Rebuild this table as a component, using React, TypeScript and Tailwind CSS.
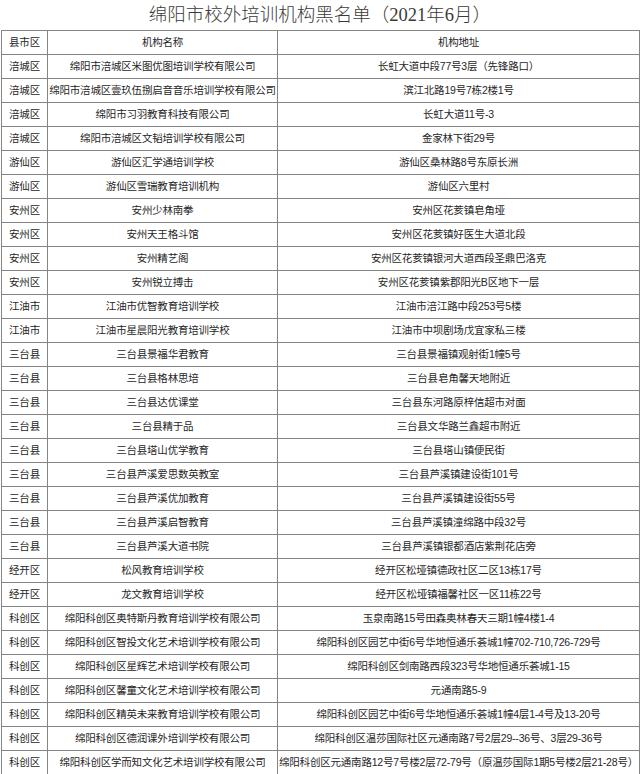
import React from 'react';

type Row = [string, string, string];

const rows: Row[] = [
  ['涪城区', '绵阳市涪城区米图优图培训学校有限公司', '长虹大道中段77号3层（先锋路口）'],
  ['涪城区', '绵阳市涪城区壹玖伍捌启音音乐培训学校有限公司', '滨江北路19号7栋2楼1号'],
  ['涪城区', '绵阳市习羽教育科技有限公司', '长虹大道11号-3'],
  ['涪城区', '绵阳市涪城区文韬培训学校有限公司', '金家林下街29号'],
  ['游仙区', '游仙区汇学通培训学校', '游仙区桑林路8号东原长洲'],
  ['游仙区', '游仙区雪瑞教育培训机构', '游仙区六里村'],
  ['安州区', '安州少林南拳', '安州区花荄镇皂角垭'],
  ['安州区', '安州天王格斗馆', '安州区花荄镇好医生大道北段'],
  ['安州区', '安州精艺阁', '安州区花荄镇银河大道西段圣鼎巴洛克'],
  ['安州区', '安州锐立搏击', '安州区花荄镇紫郡阳光B区地下一层'],
  ['江油市', '江油市优智教育培训学校', '江油市涪江路中段253号5楼'],
  ['江油市', '江油市星晨阳光教育培训学校', '江油市中坝剧场戊宜家私三楼'],
  ['三台县', '三台县景福华君教育', '三台县景福镇观射街1幢5号'],
  ['三台县', '三台县格林思培', '三台县皂角馨天地附近'],
  ['三台县', '三台县达优课堂', '三台县东河路原梓信超市对面'],
  ['三台县', '三台县精于品', '三台县文华路兰鑫超市附近'],
  ['三台县', '三台县塔山优学教育', '三台县塔山镇便民街'],
  ['三台县', '三台县芦溪爱思数英教室', '三台县芦溪镇建设街101号'],
  ['三台县', '三台县芦溪优加教育', '三台县芦溪镇建设街55号'],
  ['三台县', '三台县芦溪启智教育', '三台县芦溪镇潼绵路中段32号'],
  ['三台县', '三台县芦溪大道书院', '三台县芦溪镇银都酒店紫荆花店旁'],
  ['经开区', '松风教育培训学校', '经开区松垭镇德政社区二区13栋17号'],
  ['经开区', '龙文教育培训学校', '经开区松垭镇福馨社区一区11栋22号'],
  ['科创区', '绵阳科创区奥特斯丹教育培训学校有限公司', '玉泉南路15号田森奥林春天三期1幢4楼1-4'],
  ['科创区', '绵阳科创区智投文化艺术培训学校有限公司', '绵阳科创区园艺中街6号华地恒通乐荟城1幢702-710,726-729号'],
  ['科创区', '绵阳科创区星辉艺术培训学校有限公司', '绵阳科创区剑南路西段323号华地恒通乐荟城1-15'],
  ['科创区', '绵阳科创区馨童文化艺术培训学校有限公司', '元通南路5-9'],
  ['科创区', '绵阳科创区精英未来教育培训学校有限公司', '绵阳科创区园艺中街6号华地恒通乐荟城1幢4层1-4号及13-20号'],
  ['科创区', '绵阳科创区德润课外培训学校有限公司', '绵阳科创区温莎国际社区元通南路7号2层29--36号、3层29-36号'],
  ['科创区', '绵阳科创区学而知文化艺术培训学校有限公司', '绵阳科创区元通南路12号7号楼2层72-79号（原温莎国际1期5号楼2层21-28号）'],
];

const cell = 'border border-[#858585] text-center align-middle p-0 whitespace-nowrap overflow-hidden';

export default function App() {
  return (
    <div className="w-[640px] h-[774px] bg-white overflow-hidden text-[#262626]">
      {/* Title */}
      <h1 className="h-[30px] flex items-center justify-center text-[18.5px] leading-none font-light text-[#3a3a3a] font-['Liberation_Serif','Noto_Sans_CJK_SC',serif]">
        绵阳市校外培训机构黑名单（2021年6月）
      </h1>

      {/* Blacklist table */}
      <div className="pl-px">
        <table className="w-[638px] table-fixed border-collapse text-[10.5px] leading-none tracking-[-0.2px] font-['Liberation_Sans_Narrow','Liberation_Sans','Noto_Sans_CJK_SC',sans-serif]">
          <colgroup>
            <col className="w-[46px]" />
            <col className="w-[230px]" />
            <col className="w-[362px]" />
          </colgroup>
          <thead>
            <tr className="h-[24px]">
              <th className={`${cell} font-normal`}>县市区</th>
              <th className={`${cell} font-normal`}>机构名称</th>
              <th className={`${cell} font-normal`}>机构地址</th>
            </tr>
          </thead>
          <tbody>
            {rows.map(([area, name, addr], i) => (
              <tr key={i} className="h-[24px]">
                <td className={cell}>{area}</td>
                <td className={cell}>{name}</td>
                <td className={cell}>{addr}</td>
              </tr>
            ))}
          </tbody>
        </table>
      </div>
    </div>
  );
}
